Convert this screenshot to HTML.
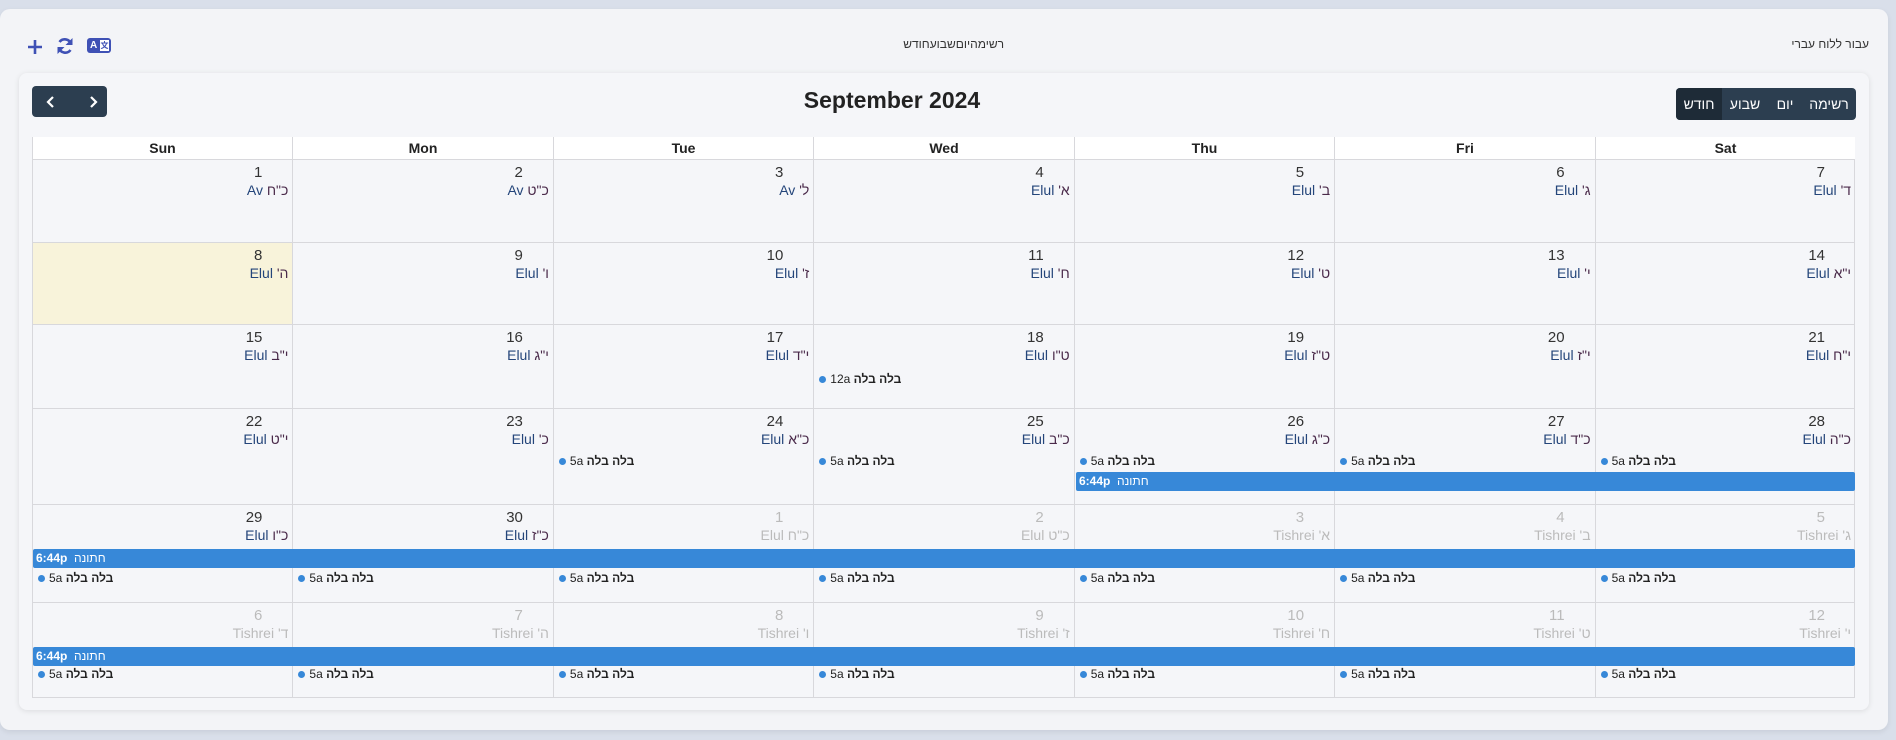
<!DOCTYPE html>
<html><head><meta charset="utf-8"><style>
*{margin:0;padding:0;box-sizing:border-box}
body{width:1896px;height:740px;overflow:hidden;background:#d9dfea;font-family:"Liberation Sans","Noto Sans CJK JP",sans-serif;position:relative;color:#222}
.outer{position:absolute;left:0;top:9px;width:1888px;height:721px;background:#f3f4f7;border-radius:10px;box-shadow:0 2px 6px rgba(0,0,0,.08)}
.inner{position:absolute;left:19px;top:73px;width:1850px;height:637px;background:#f5f6f9;border-radius:8px;box-shadow:0 1px 6px rgba(0,0,0,.1)}
.a{position:absolute}
.grid{position:absolute;left:32px;top:137px;width:1823px;height:561px;border:1px solid #d8d8dc}
.vl{position:absolute;top:137px;height:561px;width:1px;background:#d8d8dc}
.hl{position:absolute;left:32px;width:1823px;height:1px;background:#d8d8dc}
.hd{position:absolute;top:137px;height:22px;background:#fff;font-weight:bold;font-size:14px;line-height:22px;text-align:center;color:#222}
.num{position:absolute;font-size:15px;text-align:right;color:#333;width:200px}
.hb{position:absolute;font-size:14px;text-align:right;color:#4a2a4a;width:240px;direction:ltr}
.hb b{font-weight:normal;color:#24457a}
.g{color:#bbb!important}.g b{color:#bbb!important}
.ev{position:absolute;font-size:12px;color:#222;white-space:nowrap}
.ev i{display:inline-block;width:7px;height:7px;border-radius:50%;background:#3788d8;margin-right:4px;vertical-align:0}
.ev strong{font-weight:bold}
.bar{position:absolute;height:19px;background:#3788d8;color:#fff;font-size:12px;line-height:19px;padding-left:3px;white-space:nowrap;border-radius:2px}
</style></head><body>
<div class="outer"></div>
<div class="inner"></div>
<svg class="a" style="left:26px;top:38px" width="18" height="18" viewBox="0 0 18 18"><path d="M9 2v14M2 9h14" stroke="#3f51b5" stroke-width="2.6"/></svg>
<svg class="a" style="left:55px;top:36px" width="20" height="20" viewBox="0 0 20 20"><path d="M16 8A6.5 6.5 0 0 0 4.5 6M4 12a6.5 6.5 0 0 0 11.5 2" fill="none" stroke="#3f51b5" stroke-width="2.6"/><path d="M17.5 2v7h-7zM2.5 18v-7h7z" fill="#3f51b5"/></svg>
<div class="a" style="left:87px;top:38px;width:24px;height:15px;background:#3f51b5;border-radius:3px;color:#fff;font-size:10px;font-weight:bold;line-height:15px;padding-left:3px">A<span style="position:absolute;left:13px;top:2px;width:9px;height:11px;background:#fff;color:#3f51b5;font-size:8px;line-height:11px;text-align:center">文</span></div>
<div class="a" style="left:880px;top:37px;width:124px;text-align:right;font-size:12px;color:#333">רשימהיוםשבועחודש</div>
<div class="a" style="left:1700px;top:37px;width:169px;text-align:right;font-size:12px;color:#333">עבור ללוח עברי</div>
<div class="a" style="left:32px;top:86px;width:75px;height:31px;background:#2c3e50;border-radius:4px"></div>
<svg class="a" style="left:44px;top:94px" width="60" height="16" viewBox="0 0 60 16"><path d="M9 3L4 8l5 5M47 3l5 5-5 5" fill="none" stroke="#fff" stroke-width="2.2"/></svg>
<div class="a" style="left:760px;top:87px;width:264px;text-align:center;font-size:23px;font-weight:bold;color:#222">September 2024</div>
<div class="a" style="left:1676px;top:88px;width:180px;height:32px;background:#2c3e50;border-radius:4px;overflow:hidden;color:#fff;font-size:14px;line-height:32px">
<div class="a" style="left:0;top:0;width:46px;height:32px;background:#1e2b37;text-align:center">חודש</div>
<div class="a" style="left:46px;top:0;width:46px;text-align:center">שבוע</div>
<div class="a" style="left:92px;top:0;width:34px;text-align:center">יום</div>
<div class="a" style="left:126px;top:0;width:54px;text-align:center">רשימה</div>
</div>
<div class="grid"></div>
<div class="hd" style="left:33px;width:259px">Sun</div>
<div class="hd" style="left:293px;width:260px">Mon</div>
<div class="hd" style="left:554px;width:259px">Tue</div>
<div class="hd" style="left:814px;width:260px">Wed</div>
<div class="hd" style="left:1075px;width:259px">Thu</div>
<div class="hd" style="left:1335px;width:260px">Fri</div>
<div class="hd" style="left:1596px;width:259px">Sat</div>
<div class="a" style="left:33px;top:242px;width:259px;height:82px;background:#f8f3da"></div>
<div class="vl" style="left:292px"></div><div class="vl" style="left:553px"></div><div class="vl" style="left:813px"></div><div class="vl" style="left:1074px"></div><div class="vl" style="left:1334px"></div><div class="vl" style="left:1595px"></div>
<div class="hl" style="top:159px"></div><div class="hl" style="top:242px"></div><div class="hl" style="top:324px"></div><div class="hl" style="top:408px"></div><div class="hl" style="top:504px"></div><div class="hl" style="top:602px"></div>
<div id="c"></div>
<script>
var cols=[32,292.4,552.9,813.3,1073.7,1334.1,1594.6,1855];
var rows=[159,242,324,408,504,602];
var cells=[
[[1,"Av","כ\"ח",0],[2,"Av","כ\"ט",0],[3,"Av","ל'",0],[4,"Elul","א'",0],[5,"Elul","ב'",0],[6,"Elul","ג'",0],[7,"Elul","ד'",0]],
[[8,"Elul","ה'",0],[9,"Elul","ו'",0],[10,"Elul","ז'",0],[11,"Elul","ח'",0],[12,"Elul","ט'",0],[13,"Elul","י'",0],[14,"Elul","י\"א",0]],
[[15,"Elul","י\"ב",0],[16,"Elul","י\"ג",0],[17,"Elul","י\"ד",0],[18,"Elul","ט\"ו",0],[19,"Elul","ט\"ז",0],[20,"Elul","י\"ז",0],[21,"Elul","י\"ח",0]],
[[22,"Elul","י\"ט",0],[23,"Elul","כ'",0],[24,"Elul","כ\"א",0],[25,"Elul","כ\"ב",0],[26,"Elul","כ\"ג",0],[27,"Elul","כ\"ד",0],[28,"Elul","כ\"ה",0]],
[[29,"Elul","כ\"ו",0],[30,"Elul","כ\"ז",0],[1,"Elul","כ\"ח",1],[2,"Elul","כ\"ט",1],[3,"Tishrei","א'",1],[4,"Tishrei","ב'",1],[5,"Tishrei","ג'",1]],
[[6,"Tishrei","ד'",1],[7,"Tishrei","ה'",1],[8,"Tishrei","ו'",1],[9,"Tishrei","ז'",1],[10,"Tishrei","ח'",1],[11,"Tishrei","ט'",1],[12,"Tishrei","י'",1]]];
var h="";
for(var r=0;r<6;r++)for(var c=0;c<7;c++){var d=cells[r][c],L=cols[c],R=cols[c+1],t=rows[r];
var g=d[3]?" g":"";
h+='<div class="num'+g+'" style="left:'+(R-30-200)+'px;top:'+(t+5)+'px">'+d[0]+'</div>';
h+='<div class="hb'+g+'" style="left:'+(R-4-240)+'px;top:'+(t+23)+'px"><b>'+d[1]+'</b> <span dir="rtl">'+d[2]+'</span></div>';}
function ev(c,y,tm){h+='<div class="ev" style="left:'+(cols[c]+6)+'px;top:'+y+'px"><i></i>'+tm+' <strong>בלה בלה</strong></div>';}
ev(3,372,"12a");
for(var c=2;c<7;c++)ev(c,454,"5a");
for(var c=0;c<7;c++){ev(c,571,"5a");ev(c,667,"5a");}
function bar(x,y,w){h+='<div class="bar" style="left:'+x+'px;top:'+y+'px;width:'+w+'px"><strong>6:44p</strong>&nbsp; חתונה</div>';}
bar(1076,472,779);bar(33,549,1822);bar(33,647,1822);
document.getElementById("c").innerHTML=h;
</script>
</body></html>
